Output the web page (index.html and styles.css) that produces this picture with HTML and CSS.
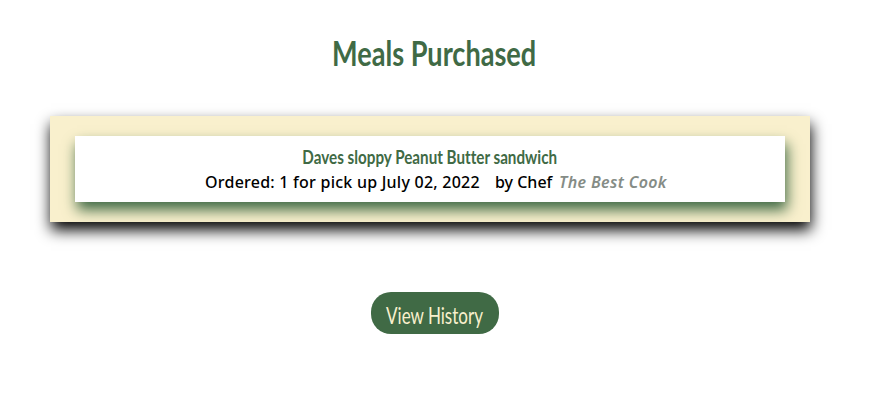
FILE: index.html
```html
<!DOCTYPE html>
<html lang="en">
<head>
<meta charset="utf-8">
<title>Meals Purchased</title>
<link rel="stylesheet" href="styles.css">
</head>
<body>
<main class="page">
  <h1 class="title"><span class="title-text">Meals Purchased</span></h1>
  <section class="orders">
    <article class="order">
      <h2 class="meal"><span class="meal-text">Daves sloppy Peanut Butter sandwich</span></h2>
      <p class="details"><span class="ordered">Ordered: 1 for pick up July 02, 2022</span><span class="by">by Chef</span><em class="chef">The Best Cook</em></p>
    </article>
  </section>
  <button class="history"><span class="history-text">View History</span></button>
</main>
</body>
</html>
```
FILE: styles.css
```css
* { box-sizing: border-box; }
body { margin: 0; background: #fff; }
.page {
  display: flex;
  flex-direction: column;
  width: 870px;
  padding-top: 29px;
}
h1, h2, p { margin: 0; white-space: nowrap; }
.title, .meal, .history {
  font-family: Lato, sans-serif;
  color: #406a45;
}
.title {
  height: 87px;
  padding-right: 1px;
  font-size: 34px;
  line-height: 48px;
  text-align: center;
}
.title-text, .meal-text, .history-text {
  display: inline-block;
  font-variant-ligatures: none;
}
.title-text { transform: scaleX(.797); }
.orders {
  width: 760px;
  height: 106px;
  margin-left: 50px;
  padding: 20px 25px;
  background: #f9f0cd;
  box-shadow: 1px 8px 14px #000;
}
.order {
  height: 66px;
  padding-top: 8px;
  background: #fff;
  box-shadow: 2px 8px 13px #406a45;
}
.meal {
  padding-right: 1px;
  font-size: 18px;
  line-height: 26px;
  text-align: center;
}
.meal-text { transform: scaleX(.845); }
.details {
  display: flex;
  padding-left: 130px;
  font: 500 16px/25px "Noto Sans", sans-serif;
  color: #000;
}
.ordered { width: 290px; letter-spacing: .24px; }
.by { width: 64px; }
.chef { color: #858c86; font-weight: 600; letter-spacing: .35px; }
.history {
  align-self: center;
  width: 128px;
  height: 42px;
  margin-top: 70px;
  padding: 3px 0 0;
  border: 0;
  border-radius: 20px;
  background: #406a45;
  color: #f9f0cd;
  font-size: 23px;
  line-height: 36px;
  white-space: nowrap;
}
.history-text { transform: translateX(-2px) scaleX(.74); }
```
